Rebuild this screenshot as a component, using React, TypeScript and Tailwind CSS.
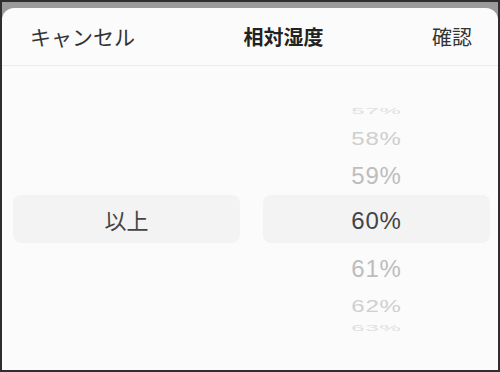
const rows = [
      { label: "57%", h: "h-[25px]", scale: "scale-y-[0.4]", color: "text-[#e0e0e0]" },
      { label: "58%", h: "h-[32px]", scale: "scale-y-[0.78]", color: "text-[#cfcfcf]" },
      { label: "59%", h: "h-[42px]", scale: "scale-y-100", color: "text-[#bdbdbd]" },
      { label: "60%", h: "h-[48px]", scale: "scale-y-100", color: "text-[#444444]" },
      { label: "61%", h: "h-[48px]", scale: "scale-y-100", color: "text-[#bdbdbd]" },
      { label: "62%", h: "h-[26px]", scale: "scale-y-[0.72]", color: "text-[#cfcfcf]" },
      { label: "63%", h: "h-[18px]", scale: "scale-y-[0.4]", color: "text-[#e0e0e0]" },
];

function App() {
      return (
            <div className="w-[500px] h-[372px] bg-[#2e2e2e] p-[2px] overflow-hidden">
                  <div className="w-full h-full flex flex-col bg-gradient-to-b from-[#9a9a9a] to-[#cfcfcf]">
                        <div className="h-[6px] shrink-0" />
                        <div
                              className="flex-1 flex flex-col bg-[#fbfbfb] rounded-t-[12px] overflow-hidden"
                              style={{ fontFamily: '"Noto Sans CJK JP", "Liberation Sans", sans-serif' }}
                        >
                              <header className="h-[58px] shrink-0 flex items-center justify-between pl-[28px] pr-[26px] border-b border-[#ececec]">
                                    <span className="text-[21px] text-[#333333]">キャンセル</span>
                                    <span className="text-[20px] font-bold text-[#222222]">相対湿度</span>
                                    <span className="text-[20px] text-[#333333]">確認</span>
                              </header>

                              <div className="flex-1 flex pl-[11px] pr-[8px] gap-[23px] pt-[30px]">
                                    <div className="flex-1 flex flex-col">
                                          <div className="h-[99px]" />
                                          <div className="h-[48px] rounded-[8px] bg-[#f3f3f3] flex items-center justify-center">
                                                <span className="text-[22px] text-[#444444]">以上</span>
                                          </div>
                                    </div>

                                    <div className="flex-1 flex flex-col">
                                          {rows.map((r) => (
                                                <div
                                                      key={r.label}
                                                      className={`${r.h} flex items-center justify-center ${
                                                            r.label === "60%" ? "rounded-[8px] bg-[#f3f3f3]" : ""
                                                      }`}
                                                >
                                                      <span
                                                            className={`text-[24px] tracking-[0.8px] translate-y-[2px] ${r.color} ${r.scale} inline-block leading-none`}
                                                            style={{ fontFamily: '"Liberation Sans", sans-serif' }}
                                                      >
                                                            {r.label}
                                                      </span>
                                                </div>
                                          ))}
                                    </div>
                              </div>
                        </div>
                  </div>
            </div>
      );
}

export default App;
